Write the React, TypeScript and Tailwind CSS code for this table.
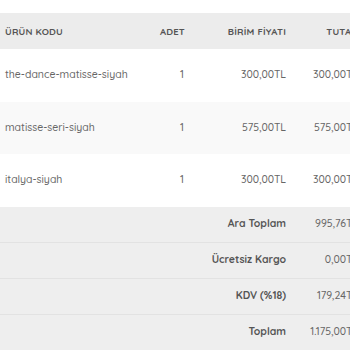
import React from "react";

const items = [
  { code: "the-dance-matisse-siyah", qty: 1, price: "300,00TL", total: "300,00TL" },
  { code: "matisse-seri-siyah", qty: 1, price: "575,00TL", total: "575,00TL" },
  { code: "italya-siyah", qty: 1, price: "300,00TL", total: "300,00TL" },
];

const totals = [
  { label: "Ara Toplam", value: "995,76TL" },
  { label: "Ücretsiz Kargo", value: "0,00TL" },
  { label: "KDV (%18)", value: "179,24TL" },
  { label: "Toplam", value: "1.175,00TL" },
];

const cols = "grid grid-cols-[140px_45px_101px_72px]";

export default function App() {
  return (
    <div
      className="w-[350px] h-[350px] overflow-hidden bg-white pt-[13px]"
      style={{ fontFamily: "Quicksand, Lato, 'Open Sans', sans-serif" }}
    >
      <div className="w-[358px]">
        {/* header */}
        <div className={`${cols} h-[36px] items-center bg-[#ececec] text-[9.5px] font-bold text-[#555] tracking-[0.2px] whitespace-nowrap`}>
          <div className="pl-[5px]">ÜRÜN KODU</div>
          <div className="text-right">ADET</div>
          <div className="text-right">BİRİM FİYATI</div>
          <div className="text-right">TUTAR</div>
        </div>

        {/* items */}
        {items.map((item, i) => (
          <div
            key={item.code}
            className={`${cols} h-[52.5px] items-center text-[10.5px] font-medium text-[#666] whitespace-nowrap ${
              i % 2 === 1 ? "bg-[#f9f9f9]" : "bg-white"
            }`}
          >
            <div className="pl-[5px]">{item.code}</div>
            <div className="text-right pr-[1px]">{item.qty}</div>
            <div className="text-right">{item.price}</div>
            <div className="text-right">{item.total}</div>
          </div>
        ))}

        {/* totals */}
        {totals.map((t) => (
          <div
            key={t.label}
            className={`${cols} h-[36px] items-center bg-[#eeeeee] border-b border-[#e2e2e2] text-[10.5px] whitespace-nowrap`}
          >
            <div />
            <div />
            <div className="text-right font-bold text-[#555]">{t.label}</div>
            <div className="text-right font-medium text-[#666]">{t.value}</div>
          </div>
        ))}
      </div>
    </div>
  );
}
